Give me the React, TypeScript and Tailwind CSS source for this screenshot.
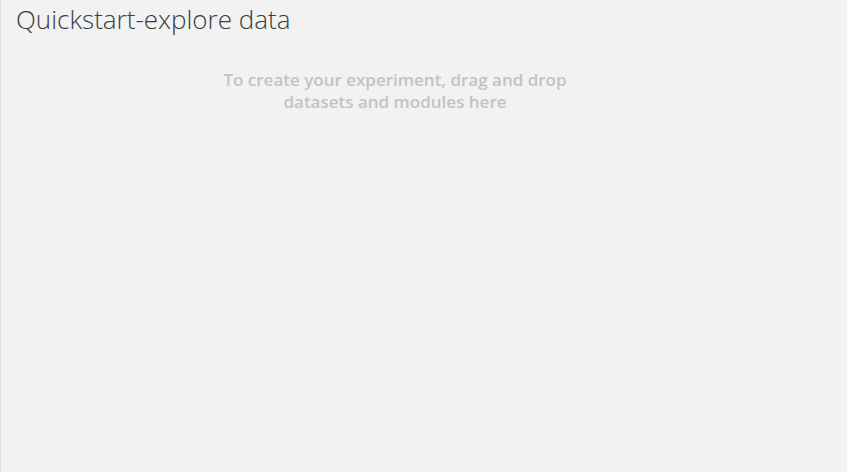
export default function App() {
    return (
        <div className="w-[847px] h-[472px] bg-[#f2f2f2] border-l border-[#dcdcdc] overflow-hidden">
            {/* Title */}
            <h1 className="pl-[15px] pt-[2px] text-[26px] leading-[34px] font-light text-[#3c3c3c] font-['Open_Sans',sans-serif]">
                Quickstart-explore data
            </h1>

            {/* Drop hint */}
            <div className="mt-[33px] ml-[194px] w-[400px] text-center text-[17px] leading-[22px] font-semibold text-[#c3c3c3] font-['Open_Sans',sans-serif]">
                To create your experiment, drag and drop
                <br />
                datasets and modules here
            </div>
        </div>
    );
}
